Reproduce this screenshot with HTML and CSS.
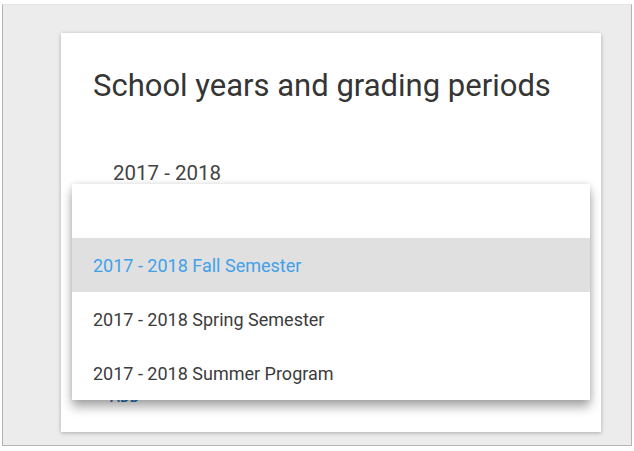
FILE: index.html
```html
<!DOCTYPE html>
<html>
<head>
<meta charset="utf-8">
<link rel="stylesheet" href="styles.css">
</head>
<body>
<div class="frame">
  <div class="card">
    <h1 class="title">School years and grading periods</h1>
    <div class="year">2017 - 2018</div>
    <div class="add">ADD</div>
    <ul class="menu">
      <li class="item empty"></li>
      <li class="item active">2017 - 2018 Fall Semester</li>
      <li class="item">2017 - 2018 Spring Semester</li>
      <li class="item">2017 - 2018 Summer Program</li>
    </ul>
  </div>
</div>
</body>
</html>
```

FILE: styles.css
```css
html, body {
  margin: 0;
  padding: 0;
  background: #ffffff;
  font-family: Roboto, "Liberation Sans", sans-serif;
}
.frame {
  margin: 4px 2px 0 2px;
  height: 442px;
  box-sizing: border-box;
  background: #ececec;
  border: 1px solid #b4b4b4;
  border-top-color: #e4e4e4;
  padding: 28px 0 0 58px;
}
.card {
  position: relative;
  width: 540px;
  height: 399px;
  box-sizing: border-box;
  background: #ffffff;
  box-shadow: 0 1px 4px rgba(0,0,0,0.28);
  padding: 35px 32px 0 32px;
}
.title {
  margin: 0;
  font-size: 31px;
  line-height: 36px;
  font-weight: 400;
  color: #353535;
}
.year {
  margin: 55px 0 0 20px;
  font-size: 20.5px;
  line-height: 28px;
  color: #444444;
}
.add {
  margin: 201px 0 0 17px;
  font-size: 15px;
  line-height: 18px;
  font-weight: 500;
  color: #2a78bd;
}
.menu {
  position: absolute;
  left: 11px;
  top: 151px;
  width: 518px;
  margin: 0;
  padding: 0;
  list-style: none;
  background: #ffffff;
  box-shadow: 0 7px 10px rgba(0,0,0,0.33), 0 0 6px rgba(0,0,0,0.12);
}
.item {
  height: 54px;
  display: flex;
  align-items: center;
  padding-left: 21px;
  font-size: 18px;
  color: #3c3c3c;
}
.item.active {
  background: #e0e0e0;
  color: #42a0ea;
}
```
